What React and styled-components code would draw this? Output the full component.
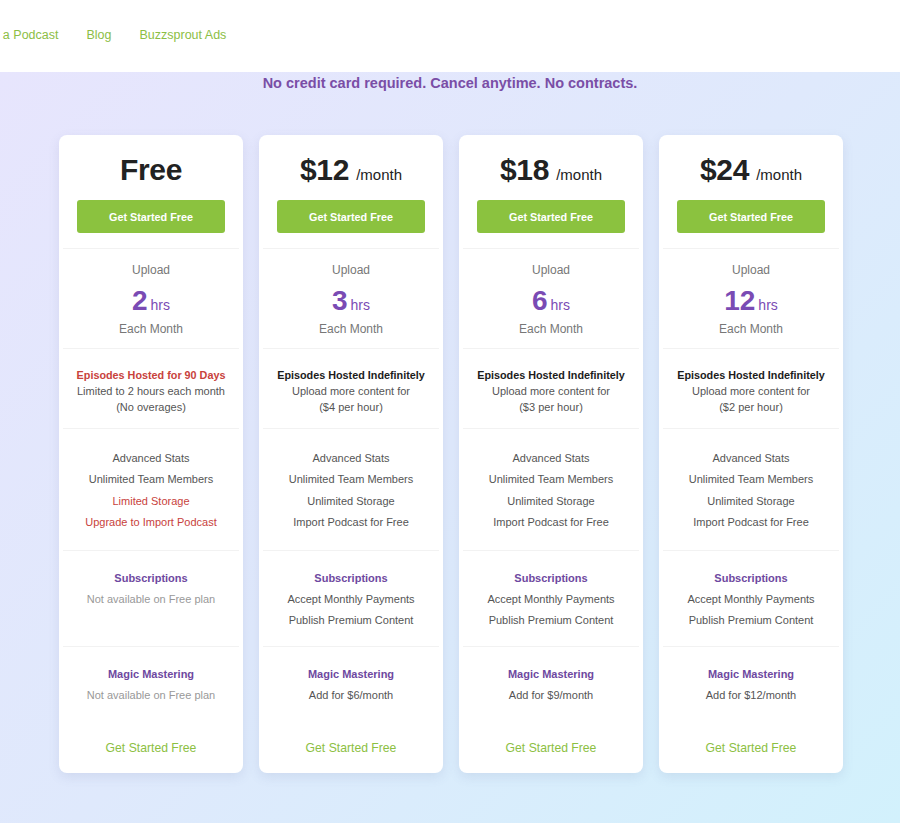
import React from 'react';
import styled, { createGlobalStyle } from 'styled-components';

const GlobalStyle = createGlobalStyle`
  html, body {
    margin: 0;
    padding: 0;
  }
  body {
    font-family: "Liberation Sans", Arial, sans-serif;
    background: #fff;
  }
`;

const plans = [
  {
    price: 'Free',
    hours: 2,
    hostedTitle: 'Episodes Hosted for 90 Days',
    hostedWarn: true,
    hostedLines: ['Limited to 2 hours each month', '(No overages)'],
    features: [
      { text: 'Advanced Stats' },
      { text: 'Unlimited Team Members' },
      { text: 'Limited Storage', warn: true },
      { text: 'Upgrade to Import Podcast', warn: true },
    ],
    subs: ['Not available on Free plan'],
    muted: true,
    magic: 'Not available on Free plan',
  },
  {
    price: '$12',
    hours: 3,
    hostedTitle: 'Episodes Hosted Indefinitely',
    hostedLines: ['Upload more content for', '($4 per hour)'],
    features: [
      { text: 'Advanced Stats' },
      { text: 'Unlimited Team Members' },
      { text: 'Unlimited Storage' },
      { text: 'Import Podcast for Free' },
    ],
    subs: ['Accept Monthly Payments', 'Publish Premium Content'],
    magic: 'Add for $6/month',
  },
  {
    price: '$18',
    hours: 6,
    hostedTitle: 'Episodes Hosted Indefinitely',
    hostedLines: ['Upload more content for', '($3 per hour)'],
    features: [
      { text: 'Advanced Stats' },
      { text: 'Unlimited Team Members' },
      { text: 'Unlimited Storage' },
      { text: 'Import Podcast for Free' },
    ],
    subs: ['Accept Monthly Payments', 'Publish Premium Content'],
    magic: 'Add for $9/month',
  },
  {
    price: '$24',
    hours: 12,
    hostedTitle: 'Episodes Hosted Indefinitely',
    hostedLines: ['Upload more content for', '($2 per hour)'],
    features: [
      { text: 'Advanced Stats' },
      { text: 'Unlimited Team Members' },
      { text: 'Unlimited Storage' },
      { text: 'Import Podcast for Free' },
    ],
    subs: ['Accept Monthly Payments', 'Publish Premium Content'],
    magic: 'Add for $12/month',
  },
];

const PlanCard = ({ plan }) => {
  const isFree = plan.price === 'Free';
  return (
    <CardStyle>
      <HeaderSection>
        <PriceStyle>
          {plan.price}
          {!isFree && <PerMonthStyle>/month</PerMonthStyle>}
        </PriceStyle>
        <GreenButton>Get Started Free</GreenButton>
      </HeaderSection>
      <UploadSection>
        <MutedLine>Upload</MutedLine>
        <HoursStyle>
          {plan.hours}<HrsUnit>hrs</HrsUnit>
        </HoursStyle>
        <MutedLine>Each Month</MutedLine>
      </UploadSection>
      <HostedSection>
        <HostedTitle $warn={plan.hostedWarn}>{plan.hostedTitle}</HostedTitle>
        {plan.hostedLines.map((l) => (
          <HostedLine key={l}>{l}</HostedLine>
        ))}
      </HostedSection>
      <FeatureSection>
        {plan.features.map((f) => (
          <FeatureLine key={f.text} $warn={f.warn}>{f.text}</FeatureLine>
        ))}
      </FeatureSection>
      <ExtraSection $divider>
        <PurpleTitle>Subscriptions</PurpleTitle>
        {plan.subs.map((s) => (
          <FeatureLine key={s} $muted={plan.muted}>{s}</FeatureLine>
        ))}
      </ExtraSection>
      <ExtraSection $short>
        <PurpleTitle>Magic Mastering</PurpleTitle>
        <FeatureLine $muted={plan.muted}>{plan.magic}</FeatureLine>
      </ExtraSection>
      <BottomLink>Get Started Free</BottomLink>
    </CardStyle>
  );
};

const App = () => {
  return (
    <>
      <GlobalStyle />
      <PageStyle>
        <TopBarStyle>
          <NavStyle>
            <NavLink>Start a Podcast</NavLink>
            <NavLink>Blog</NavLink>
            <NavLink>Buzzsprout Ads</NavLink>
          </NavStyle>
        </TopBarStyle>
        <MainStyle>
          <TaglineStyle>No credit card required. Cancel anytime. No contracts.</TaglineStyle>
          <CardsRow>
            {plans.map((p) => (
              <PlanCard key={p.price} plan={p} />
            ))}
          </CardsRow>
        </MainStyle>
      </PageStyle>
    </>
  );
};

const PageStyle = styled.div`
  width: 900px;
  height: 823px;
  display: flex;
  flex-direction: column;
  overflow: hidden;
`;

const TopBarStyle = styled.header`
  height: 72px;
  flex-shrink: 0;
  background: #fff;
  display: flex;
  align-items: center;
  overflow: hidden;
  padding-bottom: 3px;
  box-sizing: border-box;
`;

const NavStyle = styled.nav`
  display: flex;
  gap: 28px;
  margin-left: -27px;
`;

const NavLink = styled.a`
  font-size: 12.5px;
  color: #8cbe45;
  white-space: nowrap;
  cursor: pointer;
`;

const MainStyle = styled.main`
  flex: 1;
  background: linear-gradient(135deg, #e7e5fd 0%, #dfe9fc 50%, #d2f1fc 100%);
  display: flex;
  flex-direction: column;
  align-items: center;
`;

const TaglineStyle = styled.p`
  margin: 1px 0 0;
  font-size: 14.5px;
  line-height: 20px;
  font-weight: bold;
  color: #7a4ea6;
`;

const CardsRow = styled.div`
  display: grid;
  grid-template-columns: repeat(4, 184px);
  gap: 16px;
  margin-top: 42px;
  margin-left: 2px;
  align-items: start;
`;

const CardStyle = styled.div`
  background: #fff;
  border-radius: 8px;
  box-shadow: 0 4px 12px rgba(90, 100, 150, 0.12);
  display: flex;
  flex-direction: column;
  align-items: stretch;
  text-align: center;
`;

const Section = styled.div`
  margin: 0 4px;
  border-bottom: 1px solid #f2f2f2;
  display: flex;
  flex-direction: column;
  align-items: center;
`;

const HeaderSection = styled(Section)`
  padding: 17px 14px 15px;
  align-items: stretch;
`;

const PriceStyle = styled.div`
  height: 36px;
  display: flex;
  justify-content: center;
  align-items: baseline;
  font-size: 30px;
  line-height: 36px;
  font-weight: bold;
  color: #222;
  letter-spacing: -0.3px;
`;

const PerMonthStyle = styled.span`
  font-size: 15px;
  line-height: 15px;
  font-weight: normal;
  margin-left: 7px;
  letter-spacing: 0;
`;

const GreenButton = styled.button`
  margin-top: 12px;
  height: 33px;
  border: none;
  border-radius: 3px;
  background: #8bc23f;
  color: #fff;
  font-family: "Liberation Sans", Arial, sans-serif;
  font-size: 10.8px;
  font-weight: bold;
  cursor: pointer;
`;

const UploadSection = styled(Section)`
  padding: 12px 0 10px;
`;

const MutedLine = styled.div`
  font-size: 12px;
  line-height: 18px;
  color: #777;
`;

const HoursStyle = styled.div`
  height: 36px;
  margin: 4px 0 1px;
  display: flex;
  align-items: baseline;
  justify-content: center;
  font-size: 28px;
  line-height: 36px;
  font-weight: bold;
  color: #7a4bb4;
`;

const HrsUnit = styled.span`
  font-size: 14px;
  line-height: 14px;
  font-weight: normal;
  margin-left: 3px;
`;

const HostedSection = styled(Section)`
  padding: 18px 0 13px;
`;

const HostedTitle = styled.div`
  font-size: 10.8px;
  line-height: 17px;
  font-weight: bold;
  color: ${(p) => (p.$warn ? '#c8423c' : '#1c1c1c')};
`;

const HostedLine = styled.div`
  font-size: 11px;
  line-height: 15.5px;
  color: #555;
`;

const FeatureSection = styled(Section)`
  padding: 19px 0 16px;
`;

const FeatureLine = styled.div`
  font-size: 11px;
  line-height: 21.4px;
  color: ${(p) => (p.$warn ? '#c8423c' : p.$muted ? '#999' : '#555')};
`;

const ExtraSection = styled(Section)`
  height: ${(p) => (p.$short ? '89px' : '96px')};
  box-sizing: border-box;
  padding-top: 17px;
  border-bottom: ${(p) => (p.$divider ? '1px solid #f2f2f2' : 'none')};
`;

const PurpleTitle = styled.div`
  font-size: 11px;
  line-height: 21px;
  font-weight: bold;
  color: #6e48a0;
`;

const BottomLink = styled.a`
  display: block;
  font-size: 12.2px;
  line-height: 20px;
  color: #8cc042;
  padding: 2px 0 15px;
  cursor: pointer;
`;

export default App;
